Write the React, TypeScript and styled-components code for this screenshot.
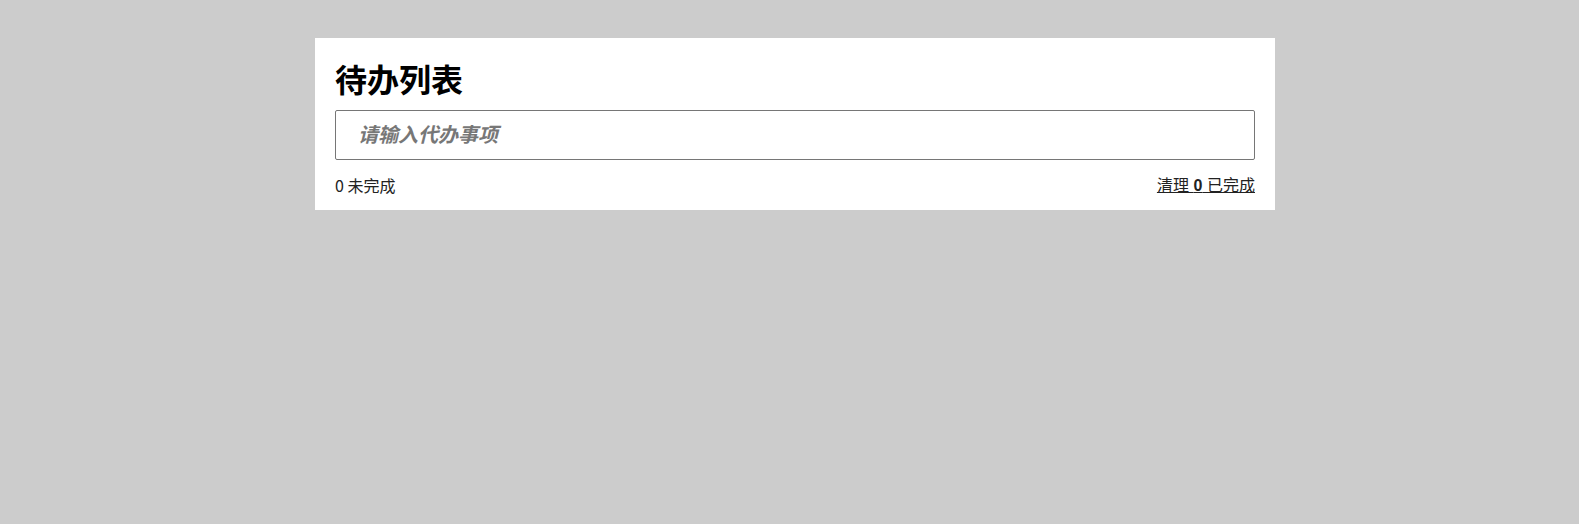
import React, { useState } from "react";
import styled, { createGlobalStyle } from "styled-components";

const GlobalStyle = createGlobalStyle`
  html, body {
    margin: 0;
    padding: 0;
    background: #cccccc;
  }
  body {
    font-family: "Noto Sans CJK SC", "Noto Sans", "Liberation Sans", sans-serif;
    color: #111;
  }
`;

const Page = styled.div`
  padding: 38px 0 0 315px;
  min-height: 524px;
  box-sizing: border-box;
`;

const Panel = styled.section`
  width: 960px;
  box-sizing: border-box;
  background: #ffffff;
  padding: 20px 20px 12px;
`;

const Title = styled.h1`
  margin: 0 0 12px;
  font-size: 32px;
  line-height: 40px;
  font-weight: 700;
  color: #000;
`;

const TodoInput = styled.input`
  display: block;
  width: 100%;
  box-sizing: border-box;
  height: 50px;
  padding: 10px 22px 14px;
  border: 1px solid #767676;
  border-radius: 2px;
  font-family: inherit;
  font-size: 20px;
  line-height: 24px;
  outline: none;
  &::placeholder {
    color: #777;
    font-style: italic;
    font-weight: 700;
  }
`;

const Footer = styled.footer`
  margin-top: 12px;
  display: flex;
  justify-content: space-between;
  align-items: center;
  font-size: 16px;
  line-height: 24px;
  color: #222;
`;

const Count = styled.span``;

const ClearLink = styled.a`
  color: #222;
  text-decoration: underline;
  cursor: pointer;
  word-spacing: 1px;
`;

const Strong = styled.strong`
  font-family: "Liberation Sans", "Noto Sans CJK SC", sans-serif;
  font-weight: 700;
`;

export default function App() {
  const [value, setValue] = useState("");
  return (
    <>
      <GlobalStyle />
      <Page>
        <Panel>
          <Title>待办列表</Title>
          <TodoInput
            placeholder="请输入代办事项"
            value={value}
            onChange={(e) => setValue(e.target.value)}
          />
          <Footer>
            <Count>0 未完成</Count>
            <ClearLink>
              清理 <Strong>0</Strong> 已完成
            </ClearLink>
          </Footer>
        </Panel>
      </Page>
    </>
  );
}
